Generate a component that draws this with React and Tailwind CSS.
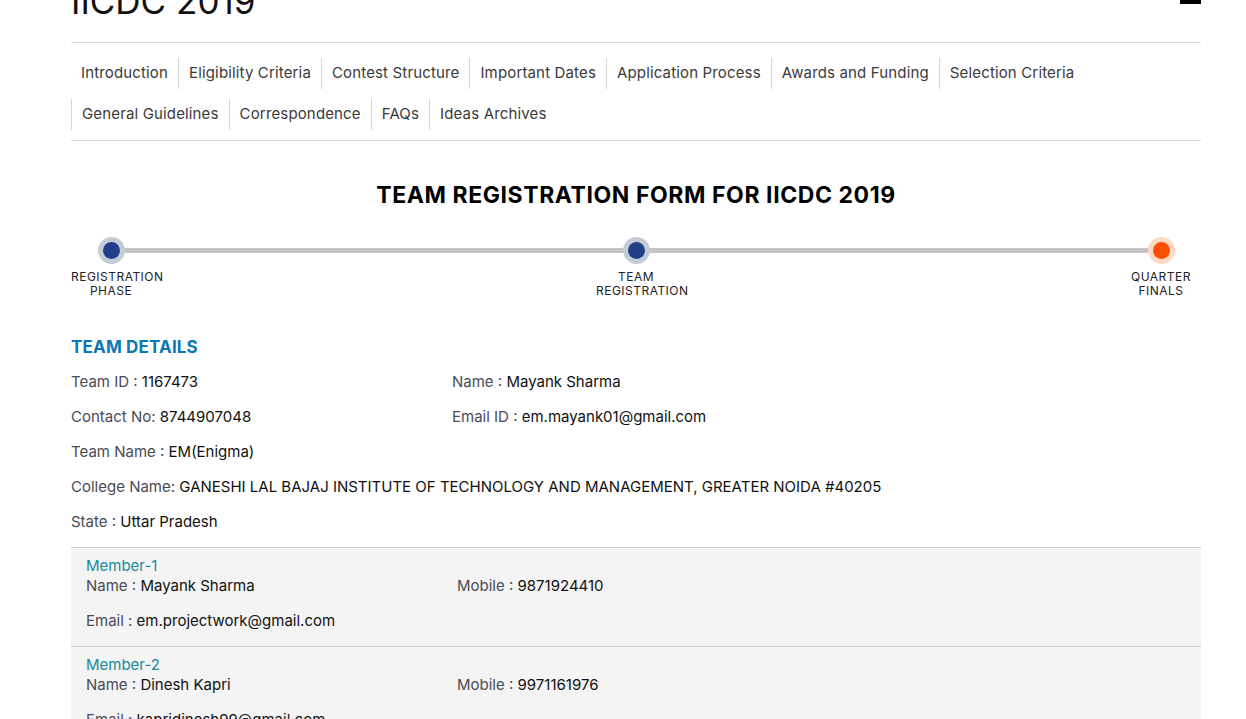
import React from 'react';

const navItems = [
  'Introduction',
  'Eligibility Criteria',
  'Contest Structure',
  'Important Dates',
  'Application Process',
  'Awards and Funding',
  'Selection Criteria',
  'General Guidelines',
  'Correspondence',
  'FAQs',
  'Ideas Archives',
];

const steps = [
  { label: ['REGISTRATION', 'PHASE'], done: true },
  { label: ['TEAM', 'REGISTRATION'], done: true },
  { label: ['QUARTER', 'FINALS'], done: false },
];

const members = [
  { title: 'Member-1', name: 'Mayank Sharma', mobile: '9871924410', email: 'em.projectwork@gmail.com' },
  { title: 'Member-2', name: 'Dinesh Kapri', mobile: '9971161976', email: 'kapridinesh99@gmail.com' },
];

function Field({ label, value, className = '' }) {
  return (
    <div className={className}>
      <span className="text-[#4a4a55]">{label}</span> <span className="text-[#111]">{value}</span>
    </div>
  );
}

function Stepper() {
  return (
    <div className="relative mt-[27px]">
      {/* connector line between first and last circle */}
      <div className="absolute left-[40px] right-[40px] top-[11px] h-[5px] bg-[#c4c4c4]" />
      <div className="relative flex justify-between">
        {steps.map((s, i) => (
          <div key={i} className="w-[80px] flex flex-col items-center">
            <div
              className={
                'w-[27px] h-[27px] rounded-full flex items-center justify-center ' +
                (s.done ? 'bg-[#c3ccd6]' : 'bg-[#fcd9c2]')
              }
            >
              <div className={'w-[17px] h-[17px] rounded-full ' + (s.done ? 'bg-[#203f88]' : 'bg-[#ff4f05]')} />
            </div>
            <div className="self-stretch mt-[6px] text-[12px] leading-[14px] tracking-[0.04em] text-[#222]">
              {s.label.map((l) => (
                <div key={l} className="whitespace-nowrap text-center">{l}</div>
              ))}
            </div>
          </div>
        ))}
      </div>
    </div>
  );
}

export default function App() {
  return (
    <div className="bg-white min-h-screen overflow-hidden" style={{ fontFamily: 'Inter, "DejaVu Sans", sans-serif' }}>
      <div className="mx-[71px] w-[1130px]">
        {/* header */}
        <div className="-mt-[23px] flex justify-between items-start pb-[17px] border-b border-[#dadada]">
          <h1 className="text-[35px] leading-[48px] text-[#111] font-normal">IICDC 2019</h1>
          <div className="mt-[5px] flex flex-col gap-[5px]">
            <span className="block w-[21px] h-[4px] bg-black" />
            <span className="block w-[21px] h-[4px] bg-black" />
            <span className="block w-[21px] h-[4px] bg-black" />
          </div>
        </div>

        {/* nav */}
        <nav className="flex flex-wrap gap-y-[10px] pt-[15px] pb-[10px] border-b border-[#dadada]">
          {navItems.map((n, i) => (
            <a
              key={n}
              href="#"
              className={
                'px-[10px] h-[31px] flex items-center text-[15px] tracking-[0.01em] text-[#3a3a3a] ' +
                (i === 0 ? '' : 'border-l border-[#d6d6d6]')
              }
            >
              {n}
            </a>
          ))}
        </nav>

        <h2 className="mt-[39px] text-center text-[23px] leading-[30px] font-bold text-black tracking-[0.025em]">
          TEAM REGISTRATION FORM FOR IICDC 2019
        </h2>

        <Stepper />

        {/* team details */}
        <h3 className="mt-[38px] text-[17px] leading-[22px] font-bold text-[#0b77b4] tracking-[0.01em]">TEAM DETAILS</h3>
        <div className="mt-[14px] text-[15px] leading-[20px] flex flex-col gap-[15px]">
          <div className="flex">
            <Field className="w-[381px]" label="Team ID :" value="1167473" />
            <Field label="Name :" value="Mayank Sharma" />
          </div>
          <div className="flex">
            <Field className="w-[381px]" label="Contact No:" value="8744907048" />
            <Field label="Email ID :" value="em.mayank01@gmail.com" />
          </div>
          <Field label="Team Name :" value="EM(Enigma)" />
          <Field
            label="College Name:"
            value="GANESHI LAL BAJAJ INSTITUTE OF TECHNOLOGY AND MANAGEMENT, GREATER NOIDA #40205"
          />
          <Field label="State :" value="Uttar Pradesh" />
        </div>

        {/* members */}
        <div className="mt-[15px] bg-[#f4f4f4]">
          {members.map((m) => (
            <div key={m.title} className="border-t border-[#cfcfcf] px-[15px] pt-[8px] pb-[15px] text-[15px] leading-[20px]">
              <div className="text-[#17899a]">{m.title}</div>
              <div className="flex">
                <Field className="w-[371px]" label="Name :" value={m.name} />
                <Field label="Mobile :" value={m.mobile} />
              </div>
              <Field className="mt-[15px]" label="Email :" value={m.email} />
            </div>
          ))}
        </div>
      </div>
    </div>
  );
}
